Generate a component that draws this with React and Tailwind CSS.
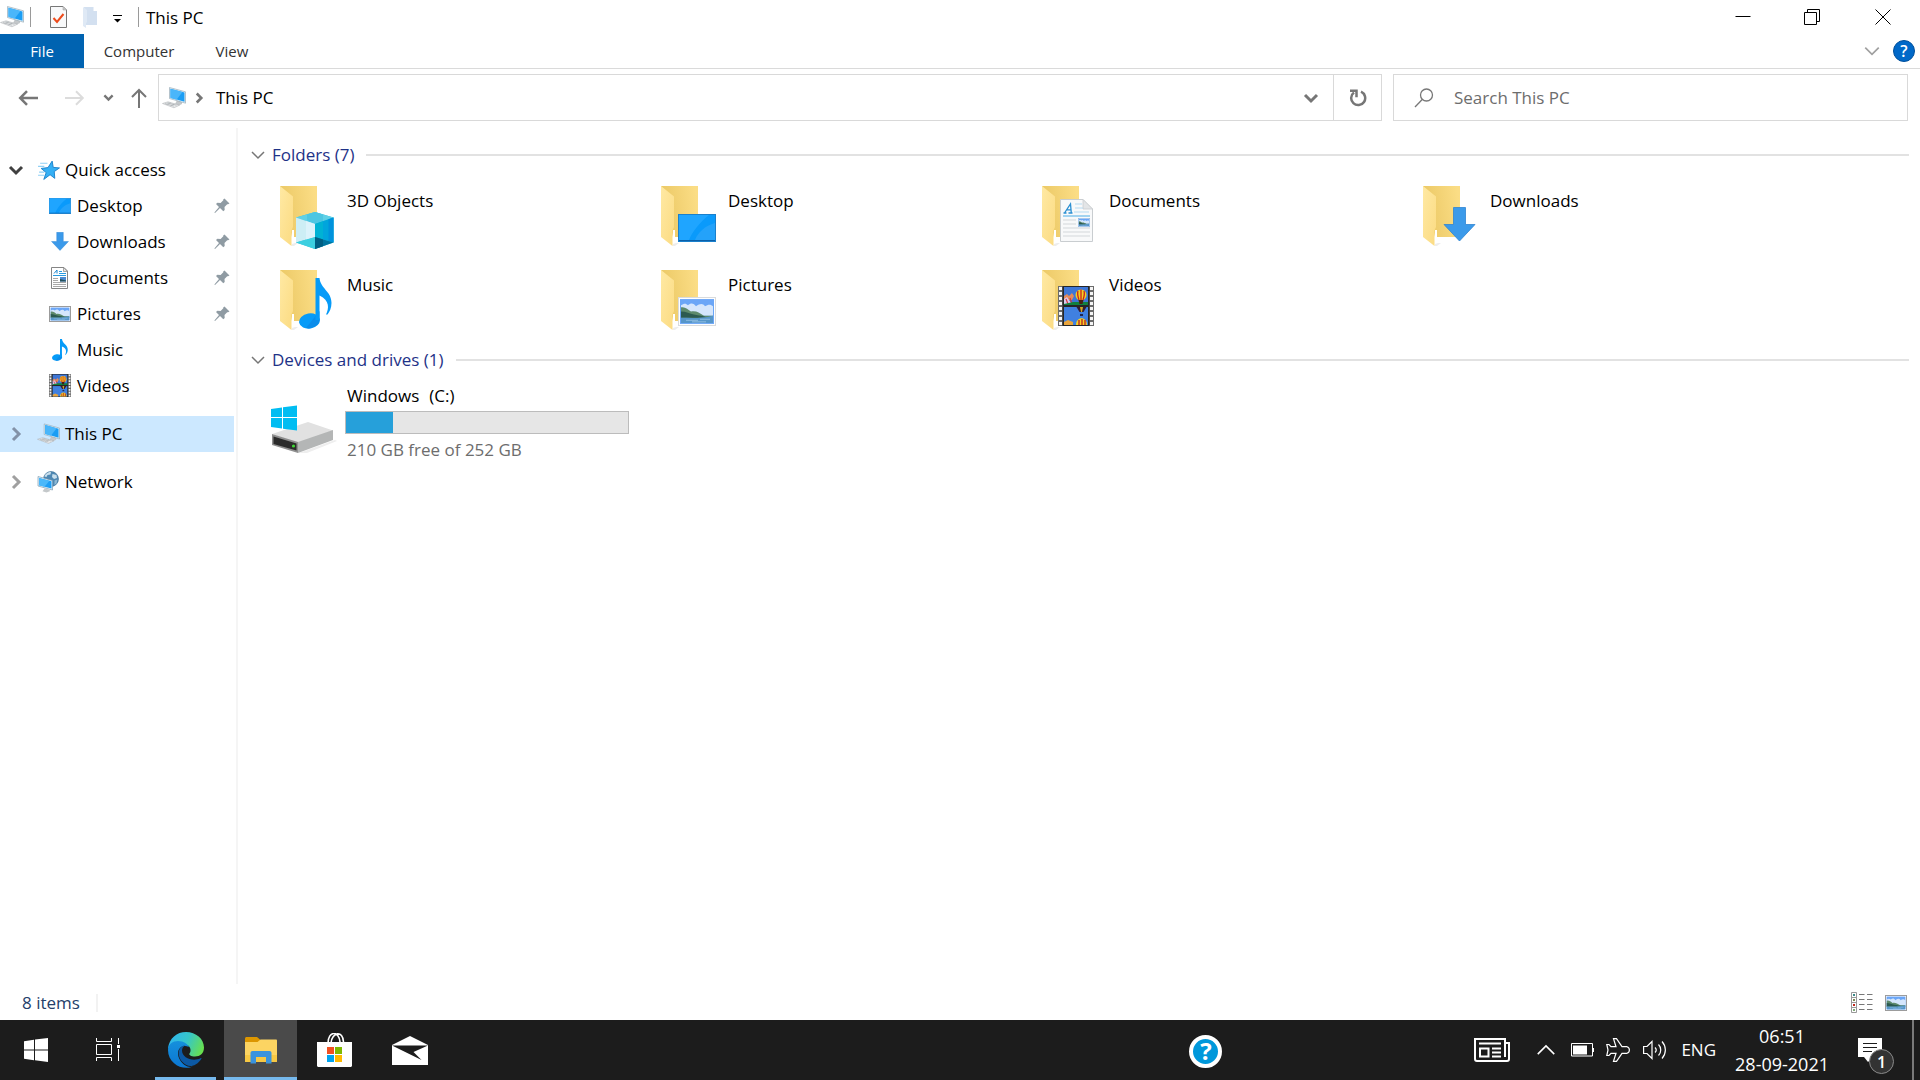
import clsx from "clsx";

function ChevronIcon({ dir = "down", className, stroke = 2 }) {
    const paths = {
        down: "M2 5l6 6 6-6",
        up: "M2 11l6-6 6 6",
        right: "M5 2l6 6-6 6",
    };
    return (
        <svg viewBox="0 0 16 16" fill="none" className={className} aria-hidden="true">
            <path d={paths[dir]} stroke="currentColor" strokeWidth={stroke} />
        </svg>
    );
}

function PcIcon({ className }) {
    return (
        <svg viewBox="0 0 24 22" className={className} aria-hidden="true">
            <path d="M15 13l5 1.500v2.500l-3 1.500-4-1.200z" fill="#c3c7ca" />
            <path d="M7.500.5l16 4.300v11.400l-16-4.700z" fill="#e8f2f8" stroke="#8aa0ad" strokeWidth=".6" />
            <path d="M8.500 1.700l14 3.800v9.300l-14-4z" fill="#1a9df4" />
            <path d="M8.500 1.700l12 3.300-6 7.700-6-1.800z" fill="#4ab6fa" />
            <path d="M.5 16.500L6 14.800l11.500 3.400-5.500 2.600z" fill="#e9ebec" stroke="#a6abae" strokeWidth=".5" />
            <path d="M3 16.500l9 2.600M5.500 15.700l9 2.600M4.500 17.500l4-1.600M8.500 18.700l4-1.700" stroke="#999fa2" strokeWidth=".5" />
        </svg>
    );
}

function StarIcon({ className }) {
    return (
        <svg viewBox="0 0 22 20" className={className} aria-hidden="true">
            <path d="M3 3.500h7M1 6.500h6M2 12h5M1 15h6" stroke="#8fd0f5" strokeWidth="1.100" />
            <path
                d="M14.500 1.500l1 6 6 .5-5 3.500.5 6.500-4.500-3.500L6.500 19l2.300-6.500L4 8.500l6.500-.8z"
                fill="#35b0f5"
                stroke="#1b81cb"
                strokeWidth=".9"
            />
        </svg>
    );
}

function NetworkIcon({ className }) {
    return (
        <svg viewBox="0 0 22 22" className={className} aria-hidden="true">
            <circle cx="13.500" cy="8" r="7.500" fill="#4f88b3" stroke="#3d6f94" strokeWidth=".6" />
            <path d="M7.500 4c2-2.500 4.500-3 6-3L13 3.500l-3 .5-1 2-2-.5zM15 3l4 1 .5 3-3 1-2-2z" fill="#c9dfec" />
            <path d="M17 9.500l3-1-1 4-2 1.500z" fill="#8fb9d4" />
            <path d="M7 17.500l4 1 2 1.500-4 1.500-4-1.200z" fill="#c4c8ca" />
            <path d="M.5 5.500L15 9.500V19L.5 15z" fill="#e3f1fa" stroke="#6c8fa6" strokeWidth=".6" />
            <path d="M1.500 6.900L14 10.300v7.300L1.500 14.200z" fill="#1e9ff5" />
            <path d="M1.500 6.900L12 9.800l-5 6-5.500-1.500z" fill="#4ab8fa" />
        </svg>
    );
}

function ScreenArt({ x, y, w, h }) {
    return (
        <svg x={x} y={y} width={w} height={h} viewBox="0 0 38 28" preserveAspectRatio="none">
            <rect x=".5" y=".5" width="37" height="27" fill="#0a9afb" stroke="#1a80cc" />
            <path d="M1 1h30C22 8 14 18 11 26H1z" fill="#1fa5ff" />
            <path d="M37 9v17H17c3-8 10-14 20-17z" fill="#35a8fa" opacity=".6" />
            <path d="M1 26.500h36" stroke="#0b5fa8" />
        </svg>
    );
}

function LandscapeArt({ x, y, w, h, frame = "#d9dbdd", border = 1 }) {
    return (
        <svg x={x} y={y} width={w} height={h} viewBox="0 0 38 28" preserveAspectRatio="none">
            <rect width="38" height="28" fill={frame} />
            <rect x={border} y={border} width={38 - border * 2} height={28 - border * 2} fill="#fff" />
            <rect x={border + 1} y={border + 1} width={36 - border * 2} height={26 - border * 2} fill="#6ba6f7" />
            <path d="M3 8c3-2 5-2 7 0 3-3 6-2 8 1 4-3 7-3 9 0 3-2 6-2 8 0v9H3z" fill="#d5e6fc" />
            <path d="M3 10c4-1 7 2 10 4 5-1 8 1 13 4h9v3H3z" fill="#5d8a6c" />
            <path d="M3 14c5 0 9 2 13 3 5 1 10 1 13 3H3z" fill="#2c5a50" />
            <path d="M3 20c9 0 20 1 32-2v7H3z" fill="#5696c9" />
            <path d="M8 22.500h12M22 21.500h10M14 24h14" stroke="#9cc6e6" strokeWidth=".8" />
        </svg>
    );
}

function PageArt({ x, y, w, h }) {
    return (
        <svg x={x} y={y} width={w} height={h} viewBox="0 0 33 43" preserveAspectRatio="none">
            <path d="M.5.5H23l9.500 9.500v32.500H.5z" fill="#f8f9fa" stroke="#c9cdd0" />
            <path d="M23 .5V10h9.500z" fill="#e3e5e7" stroke="#c9cdd0" strokeWidth=".8" />
            <path d="M3.500 14h3M8.500 14h4M4.500 14L10.500 5l.8 9M6.800 10.800h4" fill="none" stroke="#2a8fd2" strokeWidth="1.300" />
            <path d="M15 5h7M15 9h8M14 13h15" stroke="#b5daf1" />
            <path d="M3 17h27" stroke="#86c6ec" strokeWidth="1.500" />
            <path d="M3 21h13M3 25h13M3 29h27M3 33h27M3 37h27" stroke="#d3d7da" />
            <LandscapeArt x={18} y={19} w={12} h={9} frame="#5a8fc0" />
        </svg>
    );
}

function SmallPageArt() {
    return (
        <svg x="2" y="1" width="17" height="22" viewBox="0 0 17 22">
            <path d="M.5.5H13L16.500 4v17.500H.5z" fill="#fff" stroke="#858585" />
            <path d="M12.500.5v4h4z" fill="#e6e6e6" stroke="#858585" strokeWidth=".7" />
            <path d="M3 6.500L6 3v3.500" fill="none" stroke="#1e88d0" />
            <path d="M8 4.500h3M8 6.500h7M2 8.500h13" stroke="#2a9be0" />
            <path d="M2 11.500h5M2 13.500h5M2 15.500h13M2 17.500h13M2 19.500h13" stroke="#a9a9a9" />
            <path d="M9 10h6v4.500H9z" fill="#4c8ad0" />
            <path d="M9 12l6 1.500v1H9z" fill="#24505c" />
        </svg>
    );
}

function FilmArt({ x, y, w, h }) {
    return (
        <svg x={x} y={y} width={w} height={h} viewBox="0 0 36 40" preserveAspectRatio="none">
            <rect width="36" height="40" fill="#6b6b6b" />
            <path d="M2.500 1v38M33.500 1v38" stroke="#f4f4f4" strokeWidth="3" strokeDasharray="3 2" />
            <rect x="4.500" width="27" height="40" fill="#262626" />
            <rect x="6" y="1" width="24" height="18" fill="#3e76d6" />
            <rect x="6" y="21" width="24" height="18" fill="#4080e0" />
            <path d="M6 10l3-2 2 2 3-3 2 3-2 4H6z" fill="#e58a5a" />
            <path d="M6 13l3-2 4 6-3 2H6z" fill="#d8c8ee" />
            <path d="M8 13l2 5M12 12l2 6" stroke="#d8383a" strokeWidth="1.200" />
            <path d="M15 16h15v3H6v-1z" fill="#11803f" />
            <circle cx="23" cy="9" r="5.500" fill="#f4cf24" />
            <path d="M20 5c-1 3 0 6 1 9M23 3.500V15M26 5c1 3 0 6-1 9" stroke="#c8201d" strokeWidth="1.300" fill="none" />
            <path d="M20.500 14h5l-1 4h-3z" fill="#4a1f10" />
            <path d="M18.500 21h10l-3 5h-4z" fill="#331a30" />
            <path d="M22 21h3l-1 5h-1z" fill="#d4a921" />
            <rect x="22" y="28" width="3" height="2" fill="#20254d" />
            <path d="M18 39c0-9 11-9 11 0z" fill="#f4cf24" />
            <path d="M21 34v5M24 33v6M27 34v5" stroke="#b81f22" strokeWidth="1.300" />
            <path d="M6 36l4-2 5 2v3H6z" fill="#e9a43c" />
        </svg>
    );
}

function NoteArt({ x, y, w, h }) {
    return (
        <svg x={x} y={y} width={w} height={h} viewBox="0 0 33 51" preserveAspectRatio="none">
            <ellipse cx="10.500" cy="43" rx="10.500" ry="7.500" transform="rotate(-10 10.500 43)" fill="#069bf8" />
            <path d="M7 50c7 1 13-3 13.500-8V33z" fill="#0a8cea" />
            <path
                d="M16.500 0h4c1 11 12 13 12 25 0 5-2 9-4 11.500h-1.500c3-6 4-14-6.500-19V42h-4z"
                fill="#069bf8"
            />
        </svg>
    );
}

function ArrowArt({ x, y, w, h }) {
    return (
        <svg x={x} y={y} width={w} height={h} viewBox="0 0 33 35" preserveAspectRatio="none">
            <path d="M10.500.5h12v17H32L16.500 34 1 17.500h9.500z" fill="#3b9aea" stroke="#2f84d2" strokeWidth=".8" />
        </svg>
    );
}

function CubeArt() {
    return (
        <g>
            <path d="M37 28l18.500 5.500v25L37 65l-19-6.500v-25z" fill="#35c3dd" />
            <path d="M37 28l18.500 5.500L37 40l-19-6.500z" fill="#5fd0e6" />
            <path d="M29 30.500l8-2.500 8 2.500v6.700L37 40l-8-2.800z" fill="#4dc6e2" />
            <path d="M18 33.500L37 40v13l-19 5.500z" fill="#cdeef5" />
            <path d="M28 37l9 3v13l-9 2.700z" fill="#dcf3fb" />
            <path d="M37 40l18.500-6.500v25L37 53z" fill="#00a5dc" />
            <path d="M37 40l8-2.800v18.200L37 53z" fill="#00b2d4" />
            <path d="M50.500 35.200l5-1.700v25l-5-1.500z" fill="#0092dc" />
            <path d="M37 53l18.500 5.500L37 65z" fill="#00749f" />
            <path d="M37 53l8 2.400v6.800L37 65z" fill="#005f84" />
            <path d="M37 53v12l-19-6.500z" fill="#3ccfe0" />
        </g>
    );
}

function FolderIcon({ kind }) {
    return (
        <svg viewBox="0 0 60 68" className="h-[68px] w-[60px] shrink-0" aria-hidden="true">
            <defs>
                <linearGradient id="folderBack" x1="0" x2="1" y1="0.600" y2="0.400">
                    <stop offset="0" stopColor="#eac763" />
                    <stop offset="1" stopColor="#fbdd85" />
                </linearGradient>
                <linearGradient id="folderFront" x1="0" x2="1" y1="0" y2="1">
                    <stop offset="0" stopColor="#ffe9a3" />
                    <stop offset="1" stopColor="#fbdb82" />
                </linearGradient>
            </defs>
            <path d="M14 60l3-1h3l-4 3h-2z" fill="#ededed" />
            <path d="M2 2h37v51H14z" fill="url(#folderBack)" />
            <path d="M14 46h2v10h-2z" fill="#fff" />
            <path d="M2 2l13 10.500V43l-1.500 3.500V62L2 53z" fill="url(#folderFront)" />
            {kind === "cube" && <CubeArt />}
            {kind === "screen" && <ScreenArt x={19} y={30} w={38} h={28} />}
            {kind === "page" && <PageArt x={20} y={15} w={33} h={43} />}
            {kind === "arrow" && <ArrowArt x={22} y={23} w={33} h={35} />}
            {kind === "note" && <NoteArt x={21} y={10} w={33} h={51} />}
            {kind === "landscape" && <LandscapeArt x={19} y={29} w={38} h={29} />}
            {kind === "film" && <FilmArt x={18} y={18} w={36} h={40} />}
        </svg>
    );
}

function SmallIcon({ kind }) {
    return (
        <svg viewBox="0 0 22 24" className="h-6 w-[22px] shrink-0" aria-hidden="true">
            {kind === "screen" && <ScreenArt x={0} y={4} w={22} h={16} />}
            {kind === "arrow" && <ArrowArt x={2} y={2} w={18} h={19} />}
            {kind === "page" && <SmallPageArt />}
            {kind === "landscape" && <LandscapeArt x={0} y={4} w={22} h={16} frame="#9a9a9a" border={1.7} />}
            {kind === "note" && <NoteArt x={3} y={1} w={16} h={22} />}
            {kind === "film" && <FilmArt x={0} y={0} w={22} h={23} />}
        </svg>
    );
}

function PinIcon() {
    return (
        <svg viewBox="0 0 16 16" className="h-4 w-4 shrink-0" aria-hidden="true">
            <path
                d="M10.500.5l5 5-1.500.8-.8-.1-2.700 2.700.2 3-1.400 1.400L6 10l-5 5-.6-.4L5 9 2 6l1.400-1.300 3.200.3 2.700-2.700-.1-.8z"
                fill="#8f9ba3"
            />
        </svg>
    );
}

function DriveIcon() {
    return (
        <svg viewBox="0 0 66 50" className="h-[50px] w-[66px] shrink-0" aria-hidden="true">
            <path d="M28 48l36-13 2 1-30 12z" fill="#eee" />
            <path d="M1 29l36-12 25 8.500L27 38z" fill="#e1e1e1" />
            <path d="M1 29l26 8v11L1 40z" fill="#8f8f8f" />
            <path d="M2.500 31.500l23 7v7l-23-6.500z" fill="#2b2b2b" />
            <path d="M27 37l35-12v10L27 48z" fill="#b4b6b6" />
            <circle cx="22.500" cy="41" r="1.600" fill="#3fd636" />
            <path d="M0 4l11-1.500V12H0zM12 2.300L26 .5V12H12zM0 13h11v10.500L0 22zM12 13h14v12.500l-14-1.800z" fill="#00bdf2" />
        </svg>
    );
}

const pinned = [
    { label: "Desktop", icon: "screen", pin: true },
    { label: "Downloads", icon: "arrow", pin: true },
    { label: "Documents", icon: "page", pin: true },
    { label: "Pictures", icon: "landscape", pin: true },
    { label: "Music", icon: "note" },
    { label: "Videos", icon: "film" },
];

const folders = [
    { label: "3D Objects", icon: "cube" },
    { label: "Desktop", icon: "screen" },
    { label: "Documents", icon: "page" },
    { label: "Downloads", icon: "arrow" },
    { label: "Music", icon: "note" },
    { label: "Pictures", icon: "landscape" },
    { label: "Videos", icon: "film" },
];

const drives = [{ label: "Windows", letter: "(C:)", free: 210, total: 252 }];

function TitleBar() {
    return (
        <header className="flex h-[34px] shrink-0 items-center">
            <PcIcon className="h-[22px] w-6" />
            <span className="ml-1.5 h-5 w-px bg-[#9a9a9a]" />
            <button type="button" aria-label="Properties" className="ml-[19px]">
                <svg viewBox="0 0 17 22" className="h-[22px] w-[17px]">
                    <path d="M.5.5H13l3.500 3.500v17.500H.5z" fill="#f8f9fa" stroke="#777" />
                    <path d="M13 .5V4h3.500z" fill="#ccc" stroke="#999" strokeWidth=".5" />
                    <path d="M3.500 12l3.500 4 6.500-8" fill="none" stroke="#ed4b1c" strokeWidth="2" />
                </svg>
            </button>
            <button type="button" aria-label="New folder" className="ml-4">
                <svg viewBox="0 0 14 21" className="h-[21px] w-3.5">
                    <path d="M1 0h9.500v4H14v14H3z" fill="#d3e0f0" />
                    <path d="M0 0l4 3v12l-1 1v5l-3-2z" fill="#dfe9f5" />
                </svg>
            </button>
            <button type="button" aria-label="Customize Quick Access Toolbar" className="mt-1 ml-4">
                <svg viewBox="0 0 9 9" className="h-[9px] w-[9px]">
                    <path d="M0 .5h9" stroke="#000" />
                    <path d="M1 4h7L4.500 7.500z" />
                </svg>
            </button>
            <span className="ml-4 h-5 w-px bg-[#9a9a9a]" />
            <h1 className="ml-[7px] pt-px text-[17px] leading-6">This PC</h1>
            <div className="ml-auto flex h-full">
                <button type="button" aria-label="Minimize" className="flex w-[69px] items-center justify-center">
                    <svg viewBox="0 0 16 16" className="h-4 w-4" fill="none" stroke="#000">
                        <path d="M.5 7.500h15" />
                    </svg>
                </button>
                <button type="button" aria-label="Restore" className="flex w-[69px] items-center justify-center">
                    <svg viewBox="0 0 16 16" className="h-4 w-4" fill="none" stroke="#000">
                        <path d="M.5 3.500h12v12H.5zM3.500 3.500v-3h12v12h-3" />
                    </svg>
                </button>
                <button type="button" aria-label="Close" className="flex w-[74px] items-center justify-center">
                    <svg viewBox="0 0 16 16" className="h-4 w-4" fill="none" stroke="#000">
                        <path d="M.5.5l15 15M15.500.5l-15 15" />
                    </svg>
                </button>
            </div>
        </header>
    );
}

function Ribbon() {
    return (
        <div className="flex h-[35px] shrink-0 items-stretch border-b border-[#dadada] text-[15px]">
            <button type="button" className="w-[84px] bg-[#0063b1] text-white">File</button>
            <button type="button" className="w-[110px] text-[#333]">Computer</button>
            <button type="button" className="w-[76px] text-[#333]">View</button>
            <div className="ml-auto flex items-center gap-3 pr-[5px]">
                <button type="button" aria-label="Expand the Ribbon" className="text-[#a0a0a0]">
                    <ChevronIcon className="h-[18px] w-[18px]" stroke={1.5} />
                </button>
                <button
                    type="button"
                    aria-label="Help"
                    className="flex h-[22px] w-[22px] items-center justify-center rounded-full border border-[#004f9b] bg-[#0068c8] text-base leading-none font-semibold text-white"
                >
                    ?
                </button>
            </div>
        </div>
    );
}

function AddressRow() {
    return (
        <div className="flex shrink-0 items-center pt-[5px] pr-3">
            <div className="flex w-[158px] shrink-0 items-center pl-[18px] text-[#767676]">
                <button type="button" aria-label="Back">
                    <svg viewBox="0 0 20 16" className="h-4 w-5" fill="none" stroke="currentColor" strokeWidth="2.500">
                        <path d="M20 8H2.500M9 1.200L2.200 8 9 14.800" />
                    </svg>
                </button>
                <button type="button" aria-label="Forward" className="ml-[27px] text-[#dcdcdc]">
                    <svg viewBox="0 0 20 16" className="h-4 w-5" fill="none" stroke="currentColor" strokeWidth="2">
                        <path d="M0 8h18M11 1.200L17.800 8 11 14.800" />
                    </svg>
                </button>
                <button type="button" aria-label="Recent locations" className="ml-[18px]">
                    <ChevronIcon className="h-[11px] w-[11px]" stroke={3.5} />
                </button>
                <button type="button" aria-label="Up" className="ml-[17px]">
                    <svg viewBox="0 0 16 20" className="h-5 w-4" fill="none" stroke="currentColor" strokeWidth="2">
                        <path d="M8 20V2M1 9l7-7 7 7" />
                    </svg>
                </button>
            </div>
            <div className="flex h-[47px] flex-1 items-stretch border border-[#d9d9d9]">
                <button type="button" className="flex flex-1 items-center pl-[3px] text-left text-[17px]">
                    <PcIcon className="h-[22px] w-6" />
                    <ChevronIcon dir="right" className="ml-[7px] h-3 w-3 text-[#767676]" stroke={3.5} />
                    <span className="ml-[11px]">This PC</span>
                </button>
                <button
                    type="button"
                    aria-label="Previous locations"
                    className="flex w-[44px] items-center justify-center text-[#767676]"
                >
                    <ChevronIcon className="h-4 w-4" stroke={3} />
                </button>
                <button
                    type="button"
                    aria-label="Refresh"
                    className="flex w-[48px] items-center justify-center border-l border-[#d9d9d9] text-[#767676]"
                >
                    <svg viewBox="0 0 18 18" className="h-[18px] w-[18px]" fill="none" stroke="currentColor" strokeWidth="2.500">
                        <path d="M12 2.700a7 7 0 1 1-7 .8" />
                        <path d="M1 1.700h6.500v6.500" />
                    </svg>
                </button>
            </div>
            <label className="ml-[11px] flex h-[47px] w-[515px] shrink-0 items-center border border-[#d9d9d9] pl-5">
                <svg viewBox="0 0 20 20" className="h-5 w-5 shrink-0" fill="none" stroke="#777" strokeWidth="1.300">
                    <circle cx="12.500" cy="7" r="6" />
                    <path d="M8.200 11.500L1 19" />
                </svg>
                <input
                    type="text"
                    aria-label="Search This PC"
                    placeholder="Search This PC"
                    className="ml-5 min-w-0 flex-1 text-[17px] outline-none placeholder:text-[#6d6d6d]"
                />
            </label>
        </div>
    );
}

function RootItem({ label, icon: Icon, open, active }) {
    return (
        <button
            type="button"
            className={clsx("flex h-9 w-full items-center pl-2 text-[17px]", active && "bg-[#cce8ff]")}
        >
            <ChevronIcon
                dir={open ? "down" : "right"}
                className={clsx("h-4 w-4", open ? "text-[#404040]" : active ? "text-[#8392a8]" : "text-[#a0a0a0]")}
                stroke={3}
            />
            <Icon className="ml-[13px] h-[22px] w-[23px]" />
            <span className="ml-[5px]">{label}</span>
        </button>
    );
}

function Sidebar() {
    return (
        <aside className="mt-[7px] w-[238px] shrink-0 border-r-2 border-[#f5f5f5] pt-6 pr-0.5">
            <nav aria-label="Navigation pane" className="flex flex-col gap-3">
                <div>
                    <RootItem label="Quick access" icon={StarIcon} open />
                    <ul>
                        {pinned.map((item) => (
                            <li key={item.label}>
                                <button type="button" className="flex h-9 w-full items-center pr-1 pl-[49px] text-[17px]">
                                    <SmallIcon kind={item.icon} />
                                    <span className="mr-auto ml-1.5">{item.label}</span>
                                    {item.pin && <PinIcon />}
                                </button>
                            </li>
                        ))}
                    </ul>
                </div>
                <RootItem label="This PC" icon={PcIcon} active />
                <RootItem label="Network" icon={NetworkIcon} />
            </nav>
        </aside>
    );
}

function Group({ title, children }) {
    return (
        <section>
            <div className="flex h-8 items-center pr-[11px] pl-[12px]">
                <ChevronIcon className="h-4 w-4 text-[#767676]" stroke={1.5} />
                <h2 className="ml-1.5 text-[17px] text-[#1e3287]">{title}</h2>
                <span className="ml-3 h-0.5 flex-1 bg-[#e2e2e2]" />
            </div>
            {children}
        </section>
    );
}

function Content() {
    return (
        <main className="min-w-0 flex-1 pt-[18px]">
            <Group title="Folders (7)">
                <ul className="grid grid-cols-[repeat(auto-fill,381px)] gap-y-4 pt-[13px] pb-2 pl-10">
                    {folders.map((item) => (
                        <li key={item.label}>
                            <button type="button" className="flex w-full items-start text-left">
                                <FolderIcon kind={item.icon} />
                                <span className="mt-[5px] ml-[9px] text-[17px] leading-6">{item.label}</span>
                            </button>
                        </li>
                    ))}
                </ul>
            </Group>
            <Group title="Devices and drives (1)">
                <ul className="pt-2 pl-[33px]">
                    {drives.map((d) => (
                        <li key={d.letter}>
                            <button type="button" className="flex items-start text-left text-[17px] leading-6">
                                <span className="mt-[21px]">
                                    <DriveIcon />
                                </span>
                                <span className="ml-2 flex w-[284px] flex-col">
                                    <span className="flex gap-2.5 pl-0.5">
                                        <span>{d.label}</span>
                                        <span>{d.letter}</span>
                                    </span>
                                    <span className="mt-[3px] flex h-[23px] border border-[#bcbcbc] bg-[#e6e6e6]">
                                        <span
                                            className="bg-[#26a0da]"
                                            style={{ width: `${((d.total - d.free) / d.total) * 100}%` }}
                                        />
                                    </span>
                                    <span className="mt-1 pl-0.5 text-[#6d6d6d]">
                                        {d.free} GB free of {d.total} GB
                                    </span>
                                </span>
                            </button>
                        </li>
                    ))}
                </ul>
            </Group>
        </main>
    );
}

function StatusBar() {
    return (
        <footer className="flex h-9 shrink-0 items-center pt-0.5 pr-[13px] pl-[22px] text-[17px] text-[#24406a]">
            <span>8 items</span>
            <span className="ml-4 h-[18px] w-0.5 bg-[#f2f2f2]" />
            <button type="button" aria-label="Details view" className="ml-auto">
                <svg viewBox="0 0 22 22" className="h-[22px] w-[22px]" fill="none" stroke="#999">
                    <path d="M.5.5h5v20h-5zM.5 5.500h5M.5 10.500h5M.5 15.500h5" />
                    <path d="M8 2.500h5.500M16 2.500h5.500M8 7.500h5.500M16 7.500h5.500M8 12.500h5.500M16 12.500h5.500M8 17.500h5.500M16 17.500h5.500" stroke="#777" />
                    <path d="M2 3h2" stroke="#3a8a8a" strokeWidth="2" />
                    <path d="M2 8h2" stroke="#7d8a54" strokeWidth="2" />
                    <path d="M2 13h2" stroke="#c0281c" strokeWidth="2" />
                    <path d="M2 18h2" stroke="#7fa878" strokeWidth="2" />
                </svg>
            </button>
            <button type="button" aria-label="Large icons view" className="ml-3">
                <svg viewBox="0 0 22 16" className="h-4 w-[22px]">
                    <LandscapeArt x={0} y={0} w={22} h={16} frame="#9a9a9a" border={1.7} />
                </svg>
            </button>
        </footer>
    );
}

function Taskbar() {
    return (
        <div className="flex h-[60px] shrink-0 items-stretch bg-[#1c1c1c] text-white">
            <button type="button" aria-label="Start" className="flex w-[72px] items-center justify-center">
                <svg viewBox="0 0 24 24" className="h-6 w-6" fill="#fff">
                    <path d="M0 3.200l10-1.400v9.700H0zM11 1.600L24 0v11.500H11zM0 12.500h10v9.700L0 20.800zM11 12.500h13V24l-13-1.800z" />
                </svg>
            </button>
            <button type="button" aria-label="Task View" className="flex w-[72px] items-center justify-center">
                <svg viewBox="0 0 24 24" className="h-6 w-6" fill="none" stroke="#fff">
                    <path d="M.5 0v3.500h15V0M.5 6.500h15v10H.5zM.5 23v-3.500h15V23M22.500 0v6M22.500 11v12" />
                    <path d="M21 7h3v3h-3z" fill="#fff" stroke="none" />
                </svg>
            </button>
            <button
                type="button"
                aria-label="Microsoft Edge"
                className="mr-2 ml-[11px] flex w-[61px] items-center justify-center border-b-[3px] border-[#76b9ed] pt-[3px]"
            >
                <svg viewBox="0 0 36 36" className="h-9 w-9">
                    <defs>
                        <linearGradient id="edgeTop" x1="0" x2="1" y1="0.300" y2="0.600">
                            <stop offset="0" stopColor="#2fb6ef" />
                            <stop offset=".5" stopColor="#36c6c9" />
                            <stop offset="1" stopColor="#68e04e" />
                        </linearGradient>
                        <linearGradient id="edgeBody" x1="0" x2="0" y1="0" y2="1">
                            <stop offset="0" stopColor="#1590dc" />
                            <stop offset="1" stopColor="#0b76d2" />
                        </linearGradient>
                    </defs>
                    <path
                        d="M0 17C1 6 9 0 18 0c10 0 18 7 18 15.500 0 6-4 9-9 9-4 0-6.500-1.500-5.500-3 2.500-3 .5-8.500-4-9C10 11.500 3 12 0 17z"
                        fill="url(#edgeTop)"
                    />
                    <path d="M0 18C0 12 5 9 10 9c6 0 10 3.500 11 6-9-4-14 5-9 13 3 5 8 8 13 6.500C15 39 0 32 0 18z" fill="url(#edgeBody)" />
                    <path
                        d="M17.500 13c-9 2-8 12-3 17 4 4.500 9 5 13 2.500 3-1.700 5-4 6-6 0-.6-.6-.6-1-.3C25 30 14 26 14 18.500c0-2.500 1.500-4.500 3.500-5.500z"
                        fill="#0c59a4"
                    />
                </svg>
            </button>
            <button
                type="button"
                aria-label="File Explorer"
                className="flex w-[73px] items-center justify-center border-b-[3px] border-[#76b9ed] bg-[#4a4a4a] pt-[3px]"
            >
                <svg viewBox="0 0 32 27" className="h-[27px] w-8">
                    <path d="M0 1.500C0 .7.700 0 1.500 0H12l3 2.500V6H0z" fill="#dc9600" />
                    <path d="M0 5h12.500l3-2.500H31c.6 0 1 .5 1 1V24c0 .6-.5 1-1 1H1c-.6 0-1-.5-1-1z" fill="#fcd462" />
                    <path d="M0 18h32v6c0 .6-.5 1-1 1H1c-.6 0-1-.5-1-1z" fill="#f7c843" />
                    <path d="M5.500 26.500V16c0-1.200.8-2 2-2h17c1.200 0 2 .8 2 2v10.500H21V20H11v6.500z" fill="#3a93dd" />
                </svg>
            </button>
            <button type="button" aria-label="Microsoft Store" className="flex w-[75px] items-center justify-center">
                <svg viewBox="0 0 36 34" className="h-[34px] w-9">
                    <path d="M11 10C11-2 22-3 23 9M14 10C15-1 26-3 26.500 9" fill="none" stroke="#fff" strokeWidth="1.600" />
                    <path d="M0 9h35v23.500c0 .8-.7 1.500-1.500 1.500h-32C.7 34 0 33.300 0 32.500z" fill="#fff" />
                    <path d="M10 14h7v7h-7z" fill="#f25022" />
                    <path d="M18 14h7v7h-7z" fill="#7fba00" />
                    <path d="M10 22h7v7h-7z" fill="#00a4ef" />
                    <path d="M18 22h7v7h-7z" fill="#ffb900" />
                </svg>
            </button>
            <button type="button" aria-label="Mail" className="flex w-[76px] items-center justify-center">
                <svg viewBox="0 0 36 29" className="h-[29px] w-9">
                    <path d="M0 9L18 0l18 9v20H0z" fill="#fff" />
                    <path d="M0 9.500h36L21.500 16l8 8z" fill="#1c1c1c" />
                </svg>
            </button>

            <div className="ml-auto flex items-center">
                <button
                    type="button"
                    aria-label="Get Help"
                    className="mt-0.5 mr-[252px] flex h-[33px] w-[33px] items-center justify-center rounded-full border-4 border-white bg-[#0098db] text-2xl leading-none font-bold"
                >
                    ?
                </button>
                <button type="button" aria-label="News and interests" className="mr-[25px]">
                    <svg viewBox="0 0 36 24" className="h-6 w-9" fill="none" stroke="#fff" strokeWidth="2">
                        <path d="M31 19V1H1v20c0 1.200.8 2 2 2h30c1.200 0 2-.8 2-2V5h-4" />
                        <path d="M5 5.500h22M18 10.500h9M18 14.500h9M18 18.500h9M6 10.500h8.500v8H6z" />
                    </svg>
                </button>
                <button type="button" aria-label="Show hidden icons" className="mr-[14px]">
                    <ChevronIcon dir="up" className="h-[22px] w-[22px]" stroke={1.1} />
                </button>
                <button type="button" aria-label="Battery" className="mr-3">
                    <svg viewBox="0 0 23 14" className="h-3.5 w-[23px]" fill="none" stroke="#fff">
                        <path d="M.5.5h21v12.500H.5zM22.500 5v4" />
                        <path d="M2 2.500h14v9H2z" fill="#fff" stroke="none" />
                    </svg>
                </button>
                <button type="button" aria-label="Airplane mode" className="mr-[13px]">
                    <svg viewBox="0 0 24 24" className="h-6 w-6" fill="none" stroke="#fff" strokeWidth="1.200">
                        <path d="M7.500.7h3l5.500 8h5c3.200 1 3.200 5.600 0 6.600h-5l-5.500 8h-3l2.500-8H5L3 17.500H.8L2 12 .8 6.500H3l2 2.200h5z" />
                    </svg>
                </button>
                <button type="button" aria-label="Volume" className="mr-[15px]">
                    <svg viewBox="0 0 23 20" className="h-5 w-[23px]" fill="none" stroke="#fff" strokeWidth="1.200">
                        <path d="M.6 6.500H4l5-5v17l-5-5H.6z" />
                        <path d="M12 7.500c1.500 1.500 1.500 3.500 0 5M15.500 4.500c3 3 3 8 0 11M19 1.500c4.500 5 4.500 12 0 17" />
                    </svg>
                </button>
                <button type="button" aria-label="Input language" className="text-[17px]">
                    ENG
                </button>
                <button type="button" className="ml-5 flex w-[92px] flex-col items-center text-[18px] leading-7">
                    <time>06:51</time>
                    <time className="whitespace-nowrap">28-09-2021</time>
                </button>
                <button type="button" aria-label="Notifications" className="relative ml-[30px] h-6 w-6">
                    <svg viewBox="0 0 24 24" className="h-6 w-6">
                        <path d="M0 0h24v19h-9l-5 5-4-5H0z" fill="#fff" />
                        <path d="M5 5.500h14M5 9.500h14M5 13.500h9" stroke="#1c1c1c" strokeWidth="1.200" />
                    </svg>
                    <span className="absolute top-[11px] left-[11px] flex h-[25px] w-[25px] items-center justify-center rounded-full border border-[#8a8a8a] bg-[#333] text-base font-semibold">
                        1
                    </span>
                </button>
                <span className="mr-1.5 ml-[30px] h-[60px] w-0.5 bg-[#7a7a7a]" />
            </div>
        </div>
    );
}

export default function App() {
    return (
        <div className="flex h-screen flex-col overflow-hidden bg-white font-['Open_Sans','Noto_Sans',sans-serif] text-black">
            <TitleBar />
            <Ribbon />
            <AddressRow />
            <div className="flex min-h-0 flex-1">
                <Sidebar />
                <Content />
            </div>
            <StatusBar />
            <Taskbar />
        </div>
    );
}
